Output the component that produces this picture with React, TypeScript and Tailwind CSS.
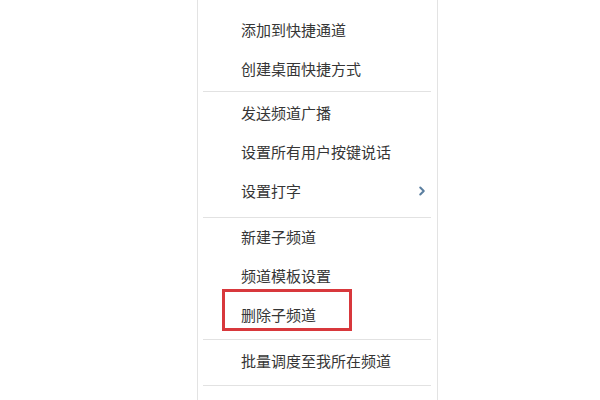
import { ChevronRight } from "lucide-react"

type Item =
  | { kind: "item"; label: string; sub?: boolean; marked?: boolean }
  | { kind: "sep"; cls: string }

const items: Item[] = [
  { kind: "item", label: "复制频道链接" },
  { kind: "item", label: "添加到快捷通道" },
  { kind: "item", label: "创建桌面快捷方式" },
  { kind: "sep", cls: "pt-[2px] pb-[2px]" },
  { kind: "item", label: "发送频道广播" },
  { kind: "item", label: "设置所有用户按键说话" },
  { kind: "item", label: "设置打字", sub: true },
  { kind: "sep", cls: "pt-[6px] pb-[0px]" },
  { kind: "item", label: "新建子频道" },
  { kind: "item", label: "频道模板设置" },
  { kind: "item", label: "删除子频道", marked: true },
  { kind: "sep", cls: "pt-[4px] pb-[2px]" },
  { kind: "item", label: "批量调度至我所在频道" },
  { kind: "sep", cls: "pt-[4px] pb-[2px]" },
  { kind: "item", label: "设置频道权限" },
]

function Row({ label, sub, marked }: { label: string; sub?: boolean; marked?: boolean }) {
  return (
    <div className="relative flex h-[39px] items-center pb-[2px] pl-[43px] pr-[8px]">
      <span className="flex-1 text-[15px] leading-none text-[#363636]">{label}</span>
      {sub && <ChevronRight className="h-[14px] w-[14px] text-[#5b7fa0]" strokeWidth={3.5} />}
      {marked && (
        <div className="pointer-events-none absolute left-[24px] top-[-7px] h-[42px] w-[130px] border-[3px] border-[#d8383c]" />
      )}
    </div>
  )
}

export default function App() {
  return (
    <div
      className="h-[400px] w-[600px] overflow-hidden bg-white"
      style={{ fontFamily: '"Noto Sans CJK SC", "Noto Sans", sans-serif' }}
    >
      <div className="ml-[197px] mt-[-28px] w-[241px] border-x border-[#e3e3e3] bg-white">
        {items.map((it, i) =>
          it.kind === "sep" ? (
            <div key={i} className={`pl-[5px] pr-[6px] ${it.cls}`}>
              <div className="h-px bg-[#e2e2e2]" />
            </div>
          ) : (
            <Row key={i} label={it.label} sub={it.sub} marked={it.marked} />
          )
        )}
      </div>
    </div>
  )
}
